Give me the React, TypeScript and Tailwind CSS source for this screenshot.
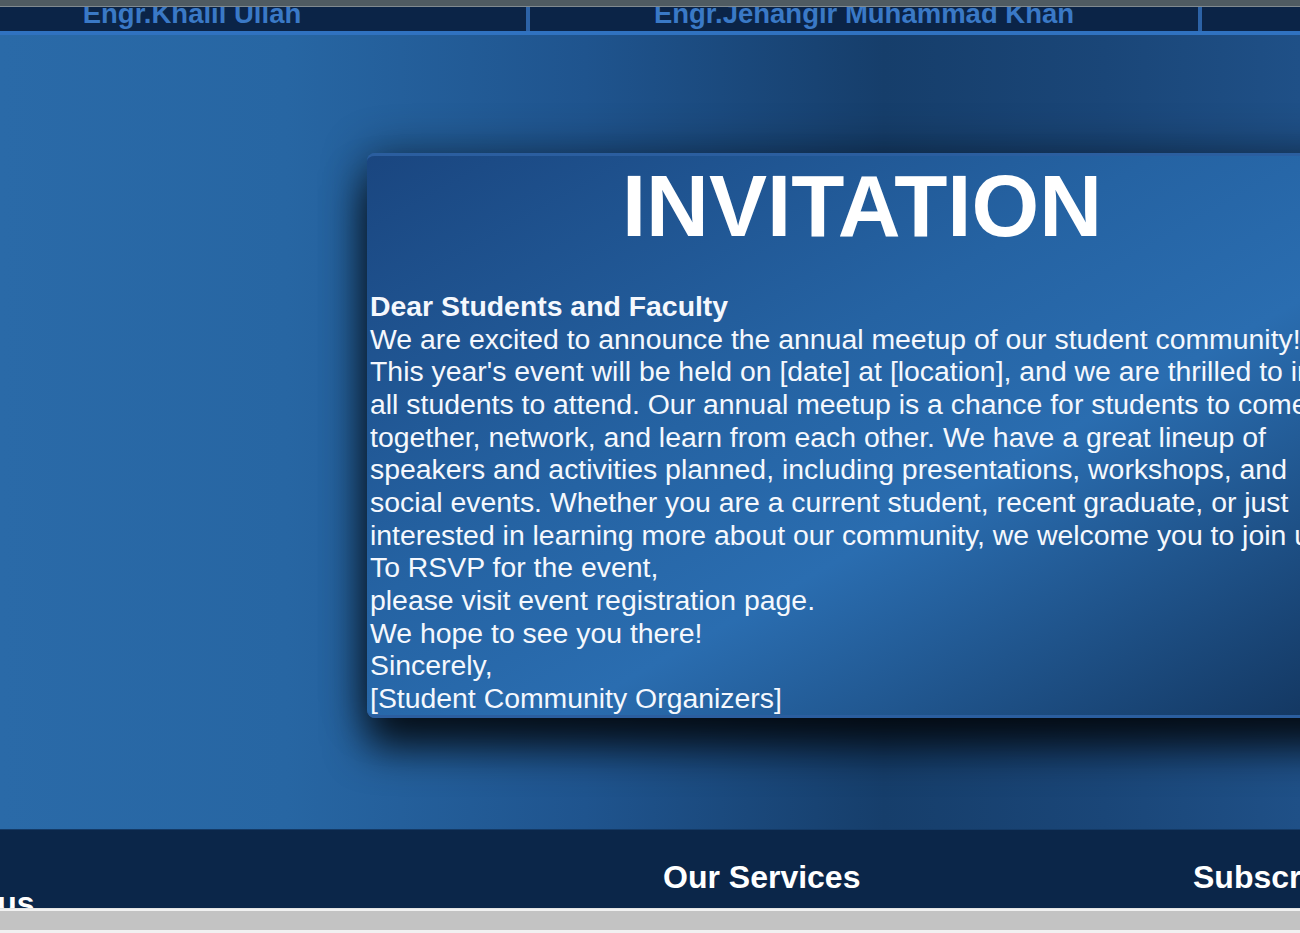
const font = { fontFamily: '"Liberation Sans", Arial, sans-serif' };

const names = ["Engr.Khalil Ullah", "Engr.Jehangir Muhammad Khan", "Engr.Abdul Basit"];

const letter = [
  "We are excited to announce the annual meetup of our student community!",
  "This year's event will be held on [date] at [location], and we are thrilled to invite",
  "all students to attend. Our annual meetup is a chance for students to come",
  "together, network, and learn from each other. We have a great lineup of",
  "speakers and activities planned, including presentations, workshops, and",
  "social events. Whether you are a current student, recent graduate, or just",
  "interested in learning more about our community, we welcome you to join us.",
  "To RSVP for the event,",
  "please visit event registration page.",
  "We hope to see you there!",
  "Sincerely,",
  "[Student Community Organizers]",
];

function TeamBar() {
  return (
    <nav className="h-[28px] overflow-hidden bg-[#0b2447] border-b-4 border-[#3072c0]">
      <div className="flex w-[2012px] -ml-[142px] h-full">
        {names.map((n, i) => (
          <div
            key={n}
            className={`w-[668px] shrink-0 text-center ${i > 0 ? "border-l-4 border-[#2c62a6] box-content" : ""}`}
          >
            <p className="-mt-[14px] text-[27.5px] font-bold leading-normal text-[#3a79c6] whitespace-nowrap">
              {n}
            </p>
          </div>
        ))}
      </div>
    </nav>
  );
}

function Invitation() {
  return (
    <div className="w-[990px] shrink-0 rounded-lg border-y-[3px] border-[#2b5e9f] bg-[linear-gradient(to_bottom_right,#1a4680_0%,#2563a3_40%,#2a6db0_60%,#12345d_100%)] px-[3px] shadow-[0_30px_40px_rgba(0,0,0,0.78),0_0_45px_rgba(0,0,0,0.45)]">
      <h1 className="text-center text-[87px] font-bold leading-[99px] text-white mb-[35px]">
        INVITATION
      </h1>
      <div className="text-[28.4px] leading-[32.67px] text-[#f5f8fd]">
        <p className="font-bold whitespace-nowrap">Dear Students and Faculty</p>
        {letter.map((l) => (
          <p key={l} className="whitespace-nowrap">
            {l}
          </p>
        ))}
      </div>
    </div>
  );
}

function Footer() {
  return (
    <footer className="h-[79px] overflow-hidden bg-[#0b2649] border-t border-[#143a66]">
      <div className="flex -ml-[142px] w-[2012px] text-white text-[32px] font-bold leading-normal">
        <div className="w-[805px] shrink-0 pl-[38px] pt-[49px]">
          <h3>About us</h3>
        </div>
        <div className="w-[530px] shrink-0 pt-[23px]">
          <h3>Our Services</h3>
        </div>
        <div className="w-[400px] shrink-0 pt-[23px]">
          <h3>Subscribe</h3>
        </div>
      </div>
    </footer>
  );
}

export default function App() {
  return (
    <div className="h-[933px] w-[1300px] overflow-hidden flex flex-col bg-[#0b2649]" style={font}>
      <div className="h-[7px] bg-[#4f5b62] border-b border-[#808a90]" />
      <TeamBar />
      <main className="h-[794px] overflow-hidden bg-[linear-gradient(90deg,#2a6aa8_0%,#2766a3_22%,#1f548e_45%,#163e6b_68%,#1a4678_85%,#1f5087_100%)]">
        <div className="flex justify-center w-[2008px] -ml-[142px] pt-[118px]">
          <Invitation />
        </div>
      </main>
      <Footer />
      <div className="h-[25px] bg-[#f1f1f1] pt-[2px] border-t border-[#e4e4e4]">
        <div className="h-[19px] bg-[#c3c3c3]" />
      </div>
    </div>
  );
}
